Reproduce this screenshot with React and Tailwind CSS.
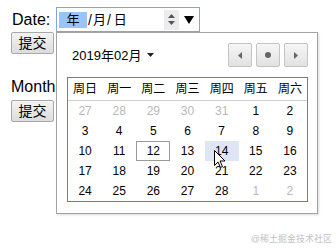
const weeks = [
  [[27, 1], [28, 1], [29, 1], [30, 1], [31, 1], [1, 0], [2, 0]],
  [[3, 0], [4, 0], [5, 0], [6, 0], [7, 0], [8, 0], [9, 0]],
  [[10, 0], [11, 0], [12, 0], [13, 0], [14, 0], [15, 0], [16, 0]],
  [[17, 0], [18, 0], [19, 0], [20, 0], [21, 0], [22, 0], [23, 0]],
  [[24, 0], [25, 0], [26, 0], [27, 0], [28, 0], [1, 1], [2, 1]],
];

const days = ['周日', '周一', '周二', '周三', '周四', '周五', '周六'];

const NavButton = ({ children }) => (
  <div className="w-[24px] h-[24px] flex items-center justify-center rounded-[2px] border border-[#c4c4c4] bg-gradient-to-b from-[#f6f6f6] to-[#e2e2e2]">
    {children}
  </div>
);

const SubmitButton = () => (
  <button className="w-[43px] h-[22px] flex items-center justify-center border border-[#a9a9a9] rounded-[2px] bg-gradient-to-b from-[#f4f4f4] to-[#dcdcdc] text-[14px] text-black leading-none">
    提交
  </button>
);

export default function App() {
  return (
    <div
      className="relative w-[336px] h-[248px] bg-white overflow-hidden text-black"
      style={{ fontFamily: '"Liberation Sans", "Noto Sans CJK SC", sans-serif' }}
    >
      <div className="pl-[11px] pt-[7px]">
        {/* date row */}
        <div className="flex items-center h-[25px]">
          <span className="w-[45px] pl-px text-[16px] leading-none">Date:</span>
          <div className="w-[144px] h-[25px] flex items-center border border-[#7ea6e6] bg-white">
            <span className="ml-[2px] w-[28px] h-[16px] bg-[#99c4fb] text-[13px] leading-[16px] text-center">年</span>
            <span className="ml-[1px] text-[14px] leading-none">/</span>
            <span className="ml-[1px] text-[13px] leading-none">月</span>
            <span className="ml-[1px] text-[14px] leading-none">/</span>
            <span className="ml-[3px] text-[13px] leading-none">日</span>
            <div className="ml-auto w-[15px] h-[20px] bg-[#ececec] flex flex-col items-center justify-center gap-[3px]">
              <svg width="7" height="4" viewBox="0 0 7 4"><path d="M0 4 L3.5 0 L7 4 Z" fill="#555" /></svg>
              <svg width="7" height="4" viewBox="0 0 7 4"><path d="M0 0 L3.5 4 L7 0 Z" fill="#555" /></svg>
            </div>
            <div className="w-[20px] flex items-center justify-center">
              <svg width="10" height="8" viewBox="0 0 10 8"><path d="M0 0 L10 0 L5 8 Z" fill="#000" /></svg>
            </div>
          </div>
        </div>
        <SubmitButton />

        {/* month row */}
        <div className="mt-[24px] h-[22px] text-[16px] leading-[18px]">Month:</div>
        <SubmitButton />
      </div>

      {/* picker popup */}
      <div className="absolute left-[56px] top-[32px] w-[262px] h-[182px] border border-[#a3a3a3] bg-white shadow-[1px_1px_2px_rgba(0,0,0,0.15)]">
        <div className="flex items-center h-[24px] mt-[10px] pl-[15px] pr-[9px]">
          <span className="text-[13px] leading-none">2019年02月</span>
          <svg className="ml-[6px]" width="7" height="4" viewBox="0 0 7 4"><path d="M0 0 L7 0 L3.5 4 Z" fill="#222" /></svg>
          <div className="ml-auto flex gap-[4px]">
            <NavButton>
              <svg width="4" height="7" viewBox="0 0 4 7"><path d="M4 0 L0 3.5 L4 7 Z" fill="#666" /></svg>
            </NavButton>
            <NavButton>
              <div className="w-[6px] h-[6px] rounded-full bg-[#666]" />
            </NavButton>
            <NavButton>
              <svg width="4" height="7" viewBox="0 0 4 7"><path d="M0 0 L4 3.5 L0 7 Z" fill="#666" /></svg>
            </NavButton>
          </div>
        </div>

        <div className="ml-[10px] mt-[10px] w-[241px] border border-[#3d86ee]">
          <div className="grid grid-cols-7 h-[23px] border-b border-[#cfcfcf] items-center">
            {days.map((d) => (
              <div key={d} className="text-center text-[12px] leading-none">{d}</div>
            ))}
          </div>
          {weeks.map((row, i) => (
            <div key={i} className="grid grid-cols-7 h-[20px]">
              {row.map(([n, other], j) => {
                const today = i === 2 && j === 2;
                const hover = i === 2 && j === 4;
                return (
                  <div
                    key={j}
                    className={`flex items-center justify-center text-[12px] leading-none ${
                      other ? 'text-[#b8b8b8]' : 'text-black'
                    } ${today ? 'border border-[#9a9a9a]' : ''} ${hover ? 'bg-[#dee5f4]' : ''}`}
                  >
                    {n}
                  </div>
                );
              })}
            </div>
          ))}
        </div>
      </div>

      {/* mouse cursor */}
      <svg className="absolute left-[214px] top-[150px]" width="12" height="19" viewBox="0 0 12 19">
        <path d="M0.5 0.5 L0.5 15.5 L4 12 L6.5 17.5 L8.5 16.5 L6 11 L11 11 Z" fill="#fff" stroke="#000" strokeWidth="1" strokeLinejoin="round" />
      </svg>

      {/* watermark */}
      <div className="absolute right-[4px] bottom-[4px] text-[9px] leading-none text-[#c2c2c2]">@稀土掘金技术社区</div>
    </div>
  );
}
